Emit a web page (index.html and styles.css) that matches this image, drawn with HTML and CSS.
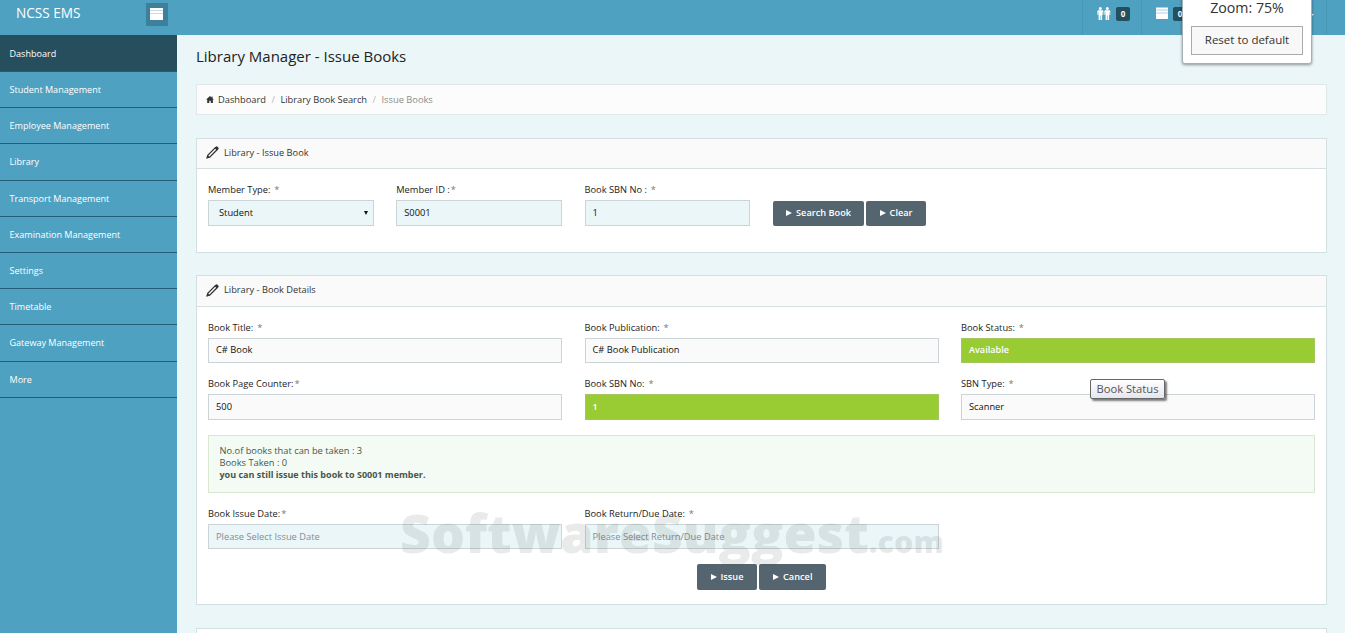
FILE: index.html
```html
<!DOCTYPE html>
<html lang="en">
<head>
  <meta charset="UTF-8">
  <title>Library Manager - Issue Books</title>
  <link rel="stylesheet" href="styles.css">
</head>
<body>
  <header class="navbar">
    <div class="brand">
      <span class="brand-name">NCSS EMS</span>
      <button class="menu-toggle" type="button">
        <svg width="13" height="12" viewBox="0 0 13 12"><path d="M0 0h13v12H0z" fill="#fff"/><path d="M0 2.5h13M0 5.5h13" stroke="#b4ccd7" stroke-width=".7"/></svg>
      </button>
    </div>
    <ul class="nav-icons">
      <li>
        <svg width="14" height="13" viewBox="0 0 14 13" fill="#fff"><circle cx="3.3" cy="1.5" r="1.5"/><circle cx="10.3" cy="1.5" r="1.5"/><path d="M1.3 3.3h4q1 0 1 1v3.4H5.4V5h-.3v8H3.6V8.5h-.5V13H1.6V5h-.3v2.7H.4V4.3q0-1 .9-1zM8.3 3.3h4q1 0 1 1v3.4h-.9V5h-.3v8h-1.5V8.5h-.5V13H8.6V5h-.3v2.7h-.9V4.3q0-1 .9-1z"/></svg>
        <span class="badge">0</span>
      </li>
      <li>
        <svg width="12" height="12" viewBox="0 0 12 12"><path d="M0 .5h12V12H0z" fill="#fff"/><path d="M0 3h12M0 6h12" stroke="#9cc8da" stroke-width=".8"/></svg>
        <span class="badge">0</span>
      </li>
      <li class="nav-user"><span class="caret"></span></li>
    </ul>
  </header>

  <div class="wrapper">
    <ul class="sidebar">
      <li class="active">Dashboard</li>
      <li>Student Management</li>
      <li>Employee Management</li>
      <li>Library</li>
      <li>Transport Management</li>
      <li>Examination Management</li>
      <li>Settings</li>
      <li>Timetable</li>
      <li>Gateway Management</li>
      <li>More</li>
    </ul>

    <main class="content">
      <h1>Library Manager - Issue Books</h1>

      <div class="breadcrumb">
        <svg width="8" height="7" viewBox="0 0 9 8"><path d="M4.5 0L6.3 1.6V.7h1.1v1.9L9 4.1H7.8V8H5.4V5.3H3.7V8H1.3V4.1H0z" fill="#333"/></svg>
        <span>Dashboard</span>
        <span class="sep">/</span>
        <span>Library Book Search</span>
        <span class="sep">/</span>
        <span class="current">Issue Books</span>
      </div>

      <section class="panel">
        <h2>
          <svg width="13" height="13" viewBox="0 0 13 13"><path d="M1.3 11.7l.7-2.6 7.2-7.2 1.9 1.9-7.2 7.2z" fill="#fff" stroke="#333" stroke-width="1.3"/><path d="M8.7 1.8l1.3-1.3q.6-.5 1.2 0l1.3 1.3q.5.6 0 1.2l-1.3 1.3zM.4 12.6l.9-3.7 2.8 2.8z" fill="#333"/></svg>
          Library - Issue Book
        </h2>
        <div class="panel-body search-row">
          <div class="field">
            <label>Member Type: &nbsp;<i>*</i></label>
            <div class="input select"><span>Student</span><span class="arrow"></span></div>
          </div>
          <div class="field">
            <label>Member ID :<i class="near">*</i></label>
            <div class="input">S0001</div>
          </div>
          <div class="field">
            <label>Book SBN No : &nbsp;<i>*</i></label>
            <div class="input">1</div>
          </div>
          <div class="buttons">
            <button class="btn" type="button"><span class="play"></span>Search Book</button>
            <button class="btn" type="button"><span class="play"></span>Clear</button>
          </div>
        </div>
      </section>

      <section class="panel details">
        <h2>
          <svg width="13" height="13" viewBox="0 0 13 13"><path d="M1.3 11.7l.7-2.6 7.2-7.2 1.9 1.9-7.2 7.2z" fill="#fff" stroke="#333" stroke-width="1.3"/><path d="M8.7 1.8l1.3-1.3q.6-.5 1.2 0l1.3 1.3q.5.6 0 1.2l-1.3 1.3zM.4 12.6l.9-3.7 2.8 2.8z" fill="#333"/></svg>
          Library - Book Details
        </h2>
        <div class="panel-body">
          <div class="grid">
            <div class="field">
              <label>Book Title: &nbsp;<i>*</i></label>
              <div class="input readonly">C# Book</div>
            </div>
            <div class="field">
              <label>Book Publication: &nbsp;<i>*</i></label>
              <div class="input readonly">C# Book Publication</div>
            </div>
            <div class="field">
              <label>Book Status: &nbsp;<i>*</i></label>
              <div class="input available">Available</div>
            </div>
            <div class="field">
              <label>Book Page Counter:<i class="near">*</i></label>
              <div class="input readonly">500</div>
            </div>
            <div class="field">
              <label>Book SBN No: &nbsp;<i>*</i></label>
              <div class="input available">1</div>
            </div>
            <div class="field">
              <label>SBN Type: &nbsp;<i>*</i></label>
              <div class="input readonly">Scanner</div>
              <div class="tooltip">Book Status</div>
            </div>
          </div>

          <div class="alert">
            No.of books that can be taken : 3<br>
            Books Taken : 0<br>
            <b>you can still issue this book to S0001 member.</b>
          </div>

          <div class="grid dates">
            <div class="field">
              <label>Book Issue Date:<i class="near">*</i></label>
              <div class="input placeholder">Please Select Issue Date</div>
            </div>
            <div class="field">
              <label>Book Return/Due Date: &nbsp;<i>*</i></label>
              <div class="input placeholder">Please Select Return/Due Date</div>
            </div>
          </div>

          <div class="buttons center">
            <button class="btn" type="button"><span class="play"></span>Issue</button>
            <button class="btn" type="button"><span class="play"></span>Cancel</button>
          </div>
        </div>
      </section>

      <section class="panel next"></section>
    </main>
  </div>

  <div class="zoom-popup">
    <div class="zoom-level">Zoom: 75%</div>
    <button type="button">Reset to default</button>
  </div>

  <div class="watermark">SoftwareSuggest<small>.com</small></div>
</body>
</html>
```

FILE: styles.css
```css
* {
  box-sizing: border-box;
}

body {
  margin: 0;
  height: 633px;
  overflow: hidden;
  font-family: "Open Sans", sans-serif;
  font-size: 9.3px;
  line-height: 12px;
  color: #333;
  background: #ebf6f8;
}

ul {
  margin: 0;
  padding: 0;
  list-style: none;
}

button {
  font-family: inherit;
}

.navbar {
  display: flex;
  justify-content: space-between;
  height: 35px;
  background: #4fa1c1;
}

.brand {
  display: flex;
  justify-content: space-between;
  width: 168px;
  padding: 3px 0 0 16px;
  color: #fff;
}

.brand-name {
  font-size: 13.6px;
  line-height: 19px;
}

.menu-toggle {
  display: flex;
  align-items: center;
  justify-content: center;
  width: 22px;
  height: 23px;
  padding: 0 1px 2px 0;
  border: 0;
  background: #3d809b;
}

.nav-icons {
  display: flex;
  width: 263px;
}

.nav-icons li {
  display: flex;
  flex: none;
  align-items: flex-start;
  gap: 5px;
  width: 59px;
  height: 35px;
  padding: 7px 0 0 14px;
  border-left: 1px solid #4797b6;
}

.nav-icons .nav-user {
  justify-content: flex-end;
  width: 127px;
  padding: 14px 12px 0 0;
  border-right: 1px solid #4797b6;
}

.badge {
  width: 14px;
  height: 14px;
  border-radius: 2px;
  background: #234f60;
  color: #fff;
  font-size: 8px;
  font-weight: 700;
  line-height: 14px;
  text-align: center;
}

.caret {
  border: 2.5px solid transparent;
  border-top-color: #fff;
  border-bottom: 0;
}

.wrapper {
  display: flex;
  height: 598px;
}

.sidebar {
  flex: none;
  width: 177px;
  background: #4fa1c1;
  color: #fff;
  font-size: 9.05px;
}

.sidebar li {
  height: 36.22px;
  padding-left: 9.5px;
  border-bottom: 1px solid #245d75;
  line-height: 36px;
}

.sidebar .active {
  height: 36.95px;
  background: #274e5d;
  line-height: 37px;
}

.content {
  flex: 1;
  overflow: hidden;
  padding: 12px 18px 0 19px;
}

h1 {
  height: 18px;
  margin: 0 0 19px;
  font-size: 15px;
  font-weight: 400;
  line-height: 18px;
  color: #222;
}

.breadcrumb {
  display: flex;
  align-items: center;
  height: 31px;
  padding-left: 9px;
  border: 1px solid #dfe9ea;
  background: #fcfcfc;
}

.breadcrumb svg {
  margin-right: 4px;
}

.breadcrumb .sep {
  margin: 0 5.5px;
  color: #bbb;
}

.breadcrumb .current {
  color: #8c8c8c;
}

.panel {
  margin-top: 23px;
  height: 115px;
  border: 1px solid #d3e0e2;
  background: #fff;
}

.panel h2 {
  display: flex;
  align-items: center;
  gap: 5px;
  height: 30px;
  margin: 0;
  padding: 0 0 2px 9px;
  border-bottom: 1px solid #d8dfe0;
  background: #fafafa;
  font-size: 9.25px;
  font-weight: 400;
}

.panel-body {
  padding: 15px 11px 0;
}

.search-row {
  display: grid;
  grid-template-columns: repeat(6, 1fr);
  column-gap: 22.5px;
}

.grid {
  display: grid;
  grid-template-columns: repeat(3, 1fr);
  gap: 15px 22.5px;
}

.field {
  position: relative;
}

label {
  display: block;
  height: 12px;
  margin-bottom: 4px;
  color: #222;
}

label i {
  margin-left: -1px;
  font-style: normal;
  color: #777;
}

label .near {
  margin-left: 1px;
}

.input {
  height: 26px;
  padding: 0 7px;
  border: 1px solid #cbd5d8;
  background: #ebf6f8;
  color: #111;
  line-height: 24px;
}

.select {
  display: flex;
  align-items: center;
  justify-content: space-between;
  padding: 0 5px 0 10px;
}

.arrow {
  border: 2.5px solid transparent;
  border-top: 4px solid #111;
  border-bottom: 0;
}

.readonly {
  background: #fafafa;
}

.available {
  border-color: #a3c661;
  background: #9c3;
  color: #fff;
  font-size: 9.1px;
  font-weight: 600;
}

.placeholder {
  color: #858d90;
}

.buttons {
  display: flex;
  gap: 2px;
  padding-top: 17px;
}

.btn {
  display: flex;
  flex: none;
  align-items: center;
  height: 25px;
  padding: 0 13.3px 2px;
  border: 0;
  border-radius: 2px;
  background: #54656f;
  color: #fff;
  font-size: 9.2px;
  font-weight: 600;
}

.play {
  margin-right: 4px;
  border: 3px solid transparent;
  border-left: 6px solid #fff;
  border-right: 0;
}

.details {
  height: 330px;
  margin-top: 22px;
}

.details h2 {
  height: 31px;
}

.details .input {
  height: 25px;
  line-height: 22px;
}

.details .grid .field:nth-child(n+4) .input {
  height: 26px;
  line-height: 24px;
}

.details .placeholder {
  line-height: 24px;
}

.alert {
  height: 58px;
  margin: 15px 0;
  padding: 9px 10.5px;
  border: 1px solid #d9e8d3;
  background: #f4faf4;
  color: #46584a;
}

.alert b {
  font-size: 9px;
}

.center {
  justify-content: center;
  padding-top: 15px;
}

.center .btn {
  height: 26px;
  padding: 0 13.8px 1px;
}

.tooltip {
  position: absolute;
  left: 129px;
  top: 1px;
  width: 75px;
  height: 20px;
  border: 1px solid #666;
  border-radius: 2px;
  background: linear-gradient(#fff, #e6e6f0);
  box-shadow: 2px 2px 2px rgba(0, 0, 0, 0.5);
  font-size: 11.2px;
  line-height: 18px;
  text-align: center;
  color: #555;
}

.zoom-popup {
  position: absolute;
  left: 1182px;
  top: -5px;
  width: 130px;
  height: 69px;
  padding: 3px 8px 0;
  border: 1px solid #a5b0b4;
  border-radius: 3px;
  background: #fff;
  box-shadow: 0 1px 3px rgba(0, 0, 0, 0.4);
  text-align: center;
  color: #333;
}

.zoom-level {
  height: 27px;
  font-size: 14.2px;
  line-height: 18px;
}

.zoom-popup button {
  width: 112px;
  height: 29px;
  padding: 0 0 2px;
  border: 1px solid #aaa;
  background: #f8f8f8;
  color: #333;
  font-size: 11.5px;
}

.watermark {
  position: absolute;
  left: 400px;
  top: 503px;
  font-size: 53.5px;
  font-weight: 800;
  line-height: 60px;
  white-space: nowrap;
  color: rgba(70, 80, 80, 0.12);
}

.watermark small {
  font-size: 30.5px;
  font-weight: 800;
}
```
